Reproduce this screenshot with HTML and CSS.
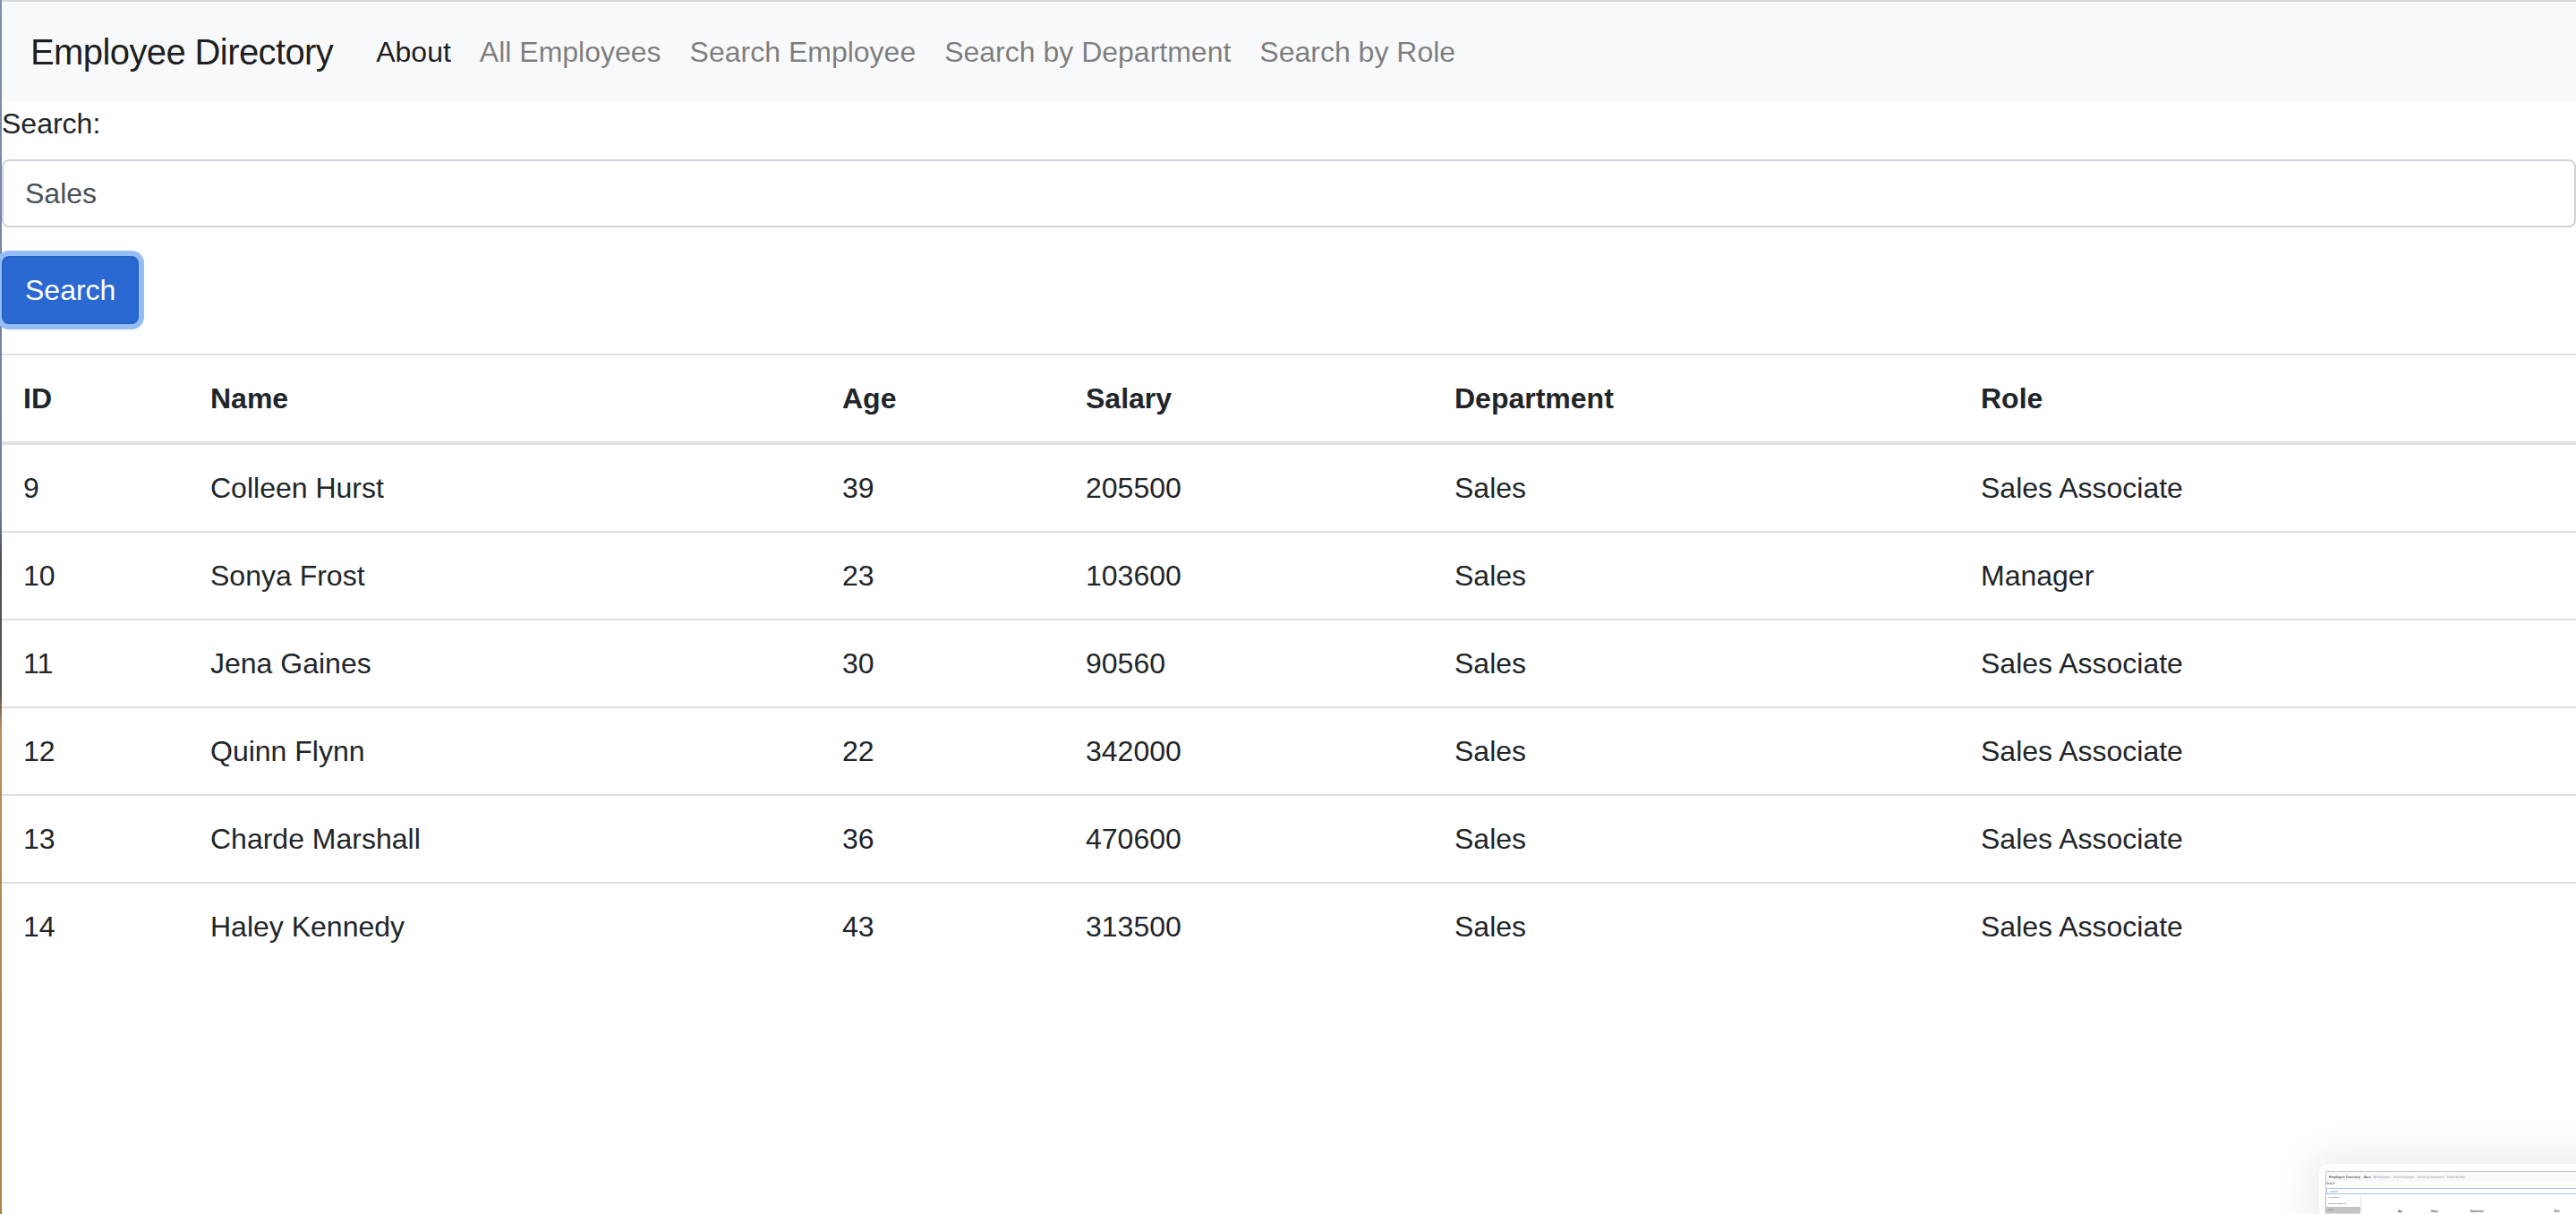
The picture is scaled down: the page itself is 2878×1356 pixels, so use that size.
FILE: index.html
```html
<!DOCTYPE html>
<html lang="en">
<head>
<meta charset="utf-8">
<title>Employee Directory</title>
<link rel="stylesheet" href="styles.css">
</head>
<body>
<div class="window">
  <nav class="navbar">
    <span class="brand">Employee Directory</span>
    <a class="nav-link active">About</a>
    <a class="nav-link">All Employees</a>
    <a class="nav-link">Search Employee</a>
    <a class="nav-link">Search by Department</a>
    <a class="nav-link">Search by Role</a>
  </nav>
  <main class="content">
    <form class="search-form">
      <div class="form-group">
        <label class="label">Search:</label>
        <div class="input">Sales</div>
      </div>
      <button type="button" class="btn">Search</button>
    </form>
    <table class="table">
      <colgroup>
        <col class="c-id"><col class="c-name"><col class="c-age"><col class="c-salary"><col class="c-dept"><col class="c-role">
      </colgroup>
      <thead>
        <tr><th>ID</th><th>Name</th><th>Age</th><th>Salary</th><th>Department</th><th>Role</th></tr>
      </thead>
      <tbody>
        <tr><td>9</td><td>Colleen Hurst</td><td>39</td><td>205500</td><td>Sales</td><td>Sales Associate</td></tr>
        <tr><td>10</td><td>Sonya Frost</td><td>23</td><td>103600</td><td>Sales</td><td>Manager</td></tr>
        <tr><td>11</td><td>Jena Gaines</td><td>30</td><td>90560</td><td>Sales</td><td>Sales Associate</td></tr>
        <tr><td>12</td><td>Quinn Flynn</td><td>22</td><td>342000</td><td>Sales</td><td>Sales Associate</td></tr>
        <tr><td>13</td><td>Charde Marshall</td><td>36</td><td>470600</td><td>Sales</td><td>Sales Associate</td></tr>
        <tr><td>14</td><td>Haley Kennedy</td><td>43</td><td>313500</td><td>Sales</td><td>Sales Associate</td></tr>
      </tbody>
    </table>
  </main>
</div>

<div class="thumb">
  <div class="mini">
    <div class="mini-nav">
      <span class="mini-brand">Employee Directory</span>
      <span class="mini-link on">About</span>
      <span class="mini-link">All Employees</span>
      <span class="mini-link">Search Employee</span>
      <span class="mini-link">Search by Department</span>
      <span class="mini-link">Search by Role</span>
    </div>
    <div class="mini-label">Search:</div>
    <div class="mini-input">search</div>
    <div class="mini-drop">
      <div class="mini-opt">Accounting</div>
      <div class="mini-opt">Web Development</div>
      <div class="mini-opt sel">Sales</div>
    </div>
    <div class="mini-head">
      <span class="mh h-age">Age</span>
      <span class="mh h-sal">Salary</span>
      <span class="mh h-dep">Department</span>
      <span class="mh h-role">Role</span>
    </div>
  </div>
</div>
</body>
</html>
```

FILE: styles.css
```css
html, body {
  margin: 0;
  padding: 0;
}

body {
  font-family: "Liberation Sans", Arial, sans-serif;
  color: #212529;
  background: linear-gradient(to bottom, #7d8fae 0%, #6f7f9a 42%, #4c4e55 46%, #5a5650 57%, #b48d5a 60%, #a9814f 100%);
  padding-left: 2px;
  min-height: 1356px;
  box-sizing: border-box;
  overflow: hidden;
}

.window {
  background: #fff;
  min-height: 1356px;
  border-top: 2px solid #d7d9dc;
  box-sizing: border-box;
}

/* navbar */
.navbar {
  display: flex;
  align-items: center;
  background: #f8f9fa;
  padding: 16px 32px;
}

.brand {
  font-size: 40px;
  line-height: 60px;
  padding: 10px 0;
  margin-right: 32px;
  color: rgba(0, 0, 0, 0.9);
  letter-spacing: -0.6px;
}

.nav-link {
  font-size: 32px;
  line-height: 48px;
  padding: 16px;
  color: rgba(0, 0, 0, 0.5);
}

.nav-link.active {
  color: rgba(0, 0, 0, 0.9);
}

/* form */
.content {
  font-size: 32px;
  line-height: 48px;
}

.search-form {
  margin: 0;
}

.form-group {
  margin-bottom: 32px;
}

.label {
  display: inline-block;
  margin-bottom: 16px;
}

.input {
  height: 76px;
  box-sizing: border-box;
  padding: 12px 24px;
  border: 2px solid #ced4da;
  border-radius: 8px;
  color: #495057;
  background: #fff;
}

.btn {
  display: block;
  font-family: inherit;
  font-size: 32px;
  line-height: 48px;
  padding: 12px 24px;
  border: 2px solid #2462c7;
  border-radius: 8px;
  background: #2a69d2;
  color: #fff;
  box-shadow: 0 0 0 6px #95bdf6;
  margin: 0;
}

/* table */
.table {
  width: 100%;
  margin-top: 33px;
  border-collapse: collapse;
  table-layout: fixed;
}

.c-id { width: 209px; }
.c-name { width: 706px; }
.c-age { width: 272px; }
.c-salary { width: 412px; }
.c-dept { width: 588px; }
.c-role { width: auto; }

.table th,
.table td {
  padding: 24px;
  text-align: left;
  vertical-align: top;
  border-top: 2px solid #dee2e6;
}

.table th {
  font-weight: bold;
  border-bottom: 4px solid #dee2e6;
}

/* screenshot thumbnail overlay */
.thumb {
  position: absolute;
  left: 2591px;
  top: 1300px;
  width: 320px;
  height: 120px;
  background: #fff;
  border-radius: 10px;
  box-shadow: 0 0 40px 12px rgba(0, 0, 0, 0.07);
  padding: 8px 0 0 7px;
  box-sizing: border-box;
}

.mini {
  border: 1px solid #c9c9c9;
  border-right: none;
  height: 100px;
  background: #fff;
  position: relative;
  font-family: "Liberation Sans", Arial, sans-serif;
  color: #333;
}

.mini-nav {
  display: flex;
  align-items: center;
  background: #f8f9fa;
  height: 11px;
  padding-left: 3px;
}

.mini-brand {
  font-size: 4px;
  margin-right: 4px;
  color: #222;
}

.mini-link {
  font-size: 3px;
  margin-right: 3px;
  color: #9a9a9a;
}

.mini-link.on {
  color: #333;
}

.mini-label {
  font-size: 3px;
  line-height: 5px;
  margin-top: 0;
}

.mini-input {
  margin-top: 2px;
  height: 7px;
  border: 1px solid #a9c9f2;
  font-size: 3px;
  line-height: 7px;
  padding-left: 3px;
  color: #888;
  box-sizing: border-box;
}

.mini-drop {
  position: absolute;
  left: 0;
  top: 25px;
  width: 38px;
  background: #fff;
  box-shadow: 0 1px 3px rgba(0, 0, 0, 0.2);
  z-index: 2;
}

.mini-opt {
  font-size: 2.4px;
  line-height: 7px;
  padding-left: 2px;
  color: #333;
}

.mini-opt.sel {
  background: #c4c4c4;
}

.mini-head {
  position: absolute;
  top: 43px;
  left: 0;
  right: 0;
  font-size: 2.6px;
  font-weight: bold;
  color: #444;
}

.mh {
  position: absolute;
  top: 0;
}

.h-age { left: 80px; }
.h-sal { left: 117px; }
.h-dep { left: 161px; }
.h-role { left: 255px; }
```
